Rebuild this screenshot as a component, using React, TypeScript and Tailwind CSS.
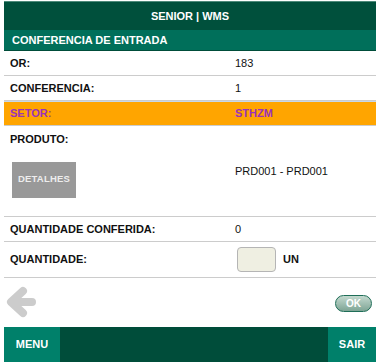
import React from "react";

const Row = ({ label, value, className = "" }: { label: string; value: React.ReactNode; className?: string }) => (
    <div className={`flex h-[25px] items-center border-b border-[#cccccc] ${className}`}>
        <div className="w-[231px] pl-[6px] font-bold">{label}</div>
        <div>{value}</div>
    </div>
);

export default function App() {
    return (
        <div className="h-[363px] w-[380px] bg-white font-['Liberation_Sans',Arial,sans-serif] text-[11px] text-[#111]">
            <div className="mx-[4px] flex flex-col pt-[1px]">
                <div className="flex h-[29px] items-center justify-center border-t border-[#4d8a7a] bg-[#00503c] font-bold text-white">
                    SENIOR | WMS
                </div>
                <div className="flex h-[21px] items-center border-b border-[#004d3a] bg-[#006f5a] pl-[8px] font-bold text-white">
                    CONFERENCIA DE ENTRADA
                </div>

                <Row label="OR:" value="183" />
                <Row label="CONFERENCIA:" value="1" />
                <Row label="SETOR:" value="STHZM" className="border-t border-t-[#c8d8e8] bg-[#ffa500] font-bold text-[#9933bb]" />

                <div className="flex h-[91px] flex-col border-b border-[#cccccc]">
                    <div className="pl-[6px] pt-[5px] font-bold">PRODUTO:</div>
                    <div className="flex pt-[14px]">
                        <div className="ml-[8px] flex h-[36px] w-[64px] items-center justify-center bg-[#999999] text-[9.5px] font-bold tracking-[0.2px] text-[#eeeeee]">
                            DETALHES
                        </div>
                        <div className="ml-[159px] pt-[1px]">PRD001 - PRD001</div>
                    </div>
                </div>

                <Row label="QUANTIDADE CONFERIDA:" value="0" />
                <div className="flex h-[36px] items-center border-b border-[#cccccc]">
                    <div className="w-[233px] pl-[6px] font-bold">QUANTIDADE:</div>
                    <input className="h-[25px] w-[39px] rounded-[4px] border border-[#b5b5b5] bg-[#efefe2] outline-none" />
                    <div className="ml-[7px] font-bold">UN</div>
                </div>

                <div className="flex h-[49px] items-start justify-between">
                    <svg width="30" height="32" viewBox="0 0 30 32" className="ml-[2px] mt-[8px]">
                        <path d="M26 16 H6 M17 5 L5 16 L17 27" fill="none" stroke="#cccccc" strokeWidth="8" strokeLinecap="round" strokeLinejoin="round" />
                    </svg>
                    <div className="mr-[4px] mt-[17px] flex h-[17px] w-[37px] items-center justify-center rounded-full border border-[#1f6e58] bg-[linear-gradient(#c4d9cf,#7ea595)] text-[10px] font-bold text-white">
                        OK
                    </div>
                </div>

                <div className="flex h-[35px] bg-[#004d3a] font-bold text-white">
                    <div className="flex w-[56px] items-center justify-center bg-[#00806a]">MENU</div>
                    <div className="flex-1" />
                    <div className="flex w-[48px] items-center justify-center bg-[#00806a]">SAIR</div>
                </div>
            </div>
        </div>
    );
}
